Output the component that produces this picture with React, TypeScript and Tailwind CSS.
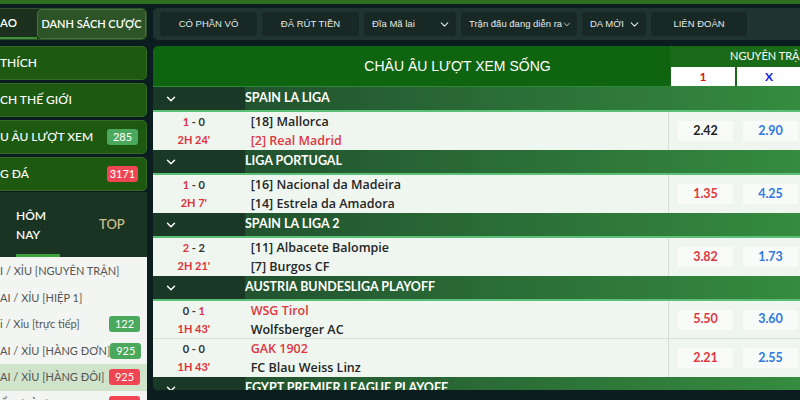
import { ChevronDown } from "lucide-react";

type Match = {
  score: [string, string];
  redGoal: number;
  time: string;
  home: string;
  away: string;
  redTeam: number;
  o1: string;
  o1Red: boolean;
  ox: string;
  o2: string;
};

const leagues: { name: string; matches: Match[] }[] = [
  {
    name: "SPAIN LA LIGA",
    matches: [
      { score: ["1", "0"], redGoal: 0, time: "2H 24'", home: "[18] Mallorca", away: "[2] Real Madrid", redTeam: 1, o1: "2.42", o1Red: false, ox: "2.90", o2: "3.35" },
    ],
  },
  {
    name: "LIGA PORTUGAL",
    matches: [
      { score: ["1", "0"], redGoal: 0, time: "2H 7'", home: "[16] Nacional da Madeira", away: "[14] Estrela da Amadora", redTeam: -1, o1: "1.35", o1Red: true, ox: "4.25", o2: "11.0" },
    ],
  },
  {
    name: "SPAIN LA LIGA 2",
    matches: [
      { score: ["2", "2"], redGoal: 0, time: "2H 21'", home: "[11] Albacete Balompie", away: "[7] Burgos CF", redTeam: -1, o1: "3.82", o1Red: true, ox: "1.73", o2: "4.60" },
    ],
  },
  {
    name: "AUSTRIA BUNDESLIGA PLAYOFF",
    matches: [
      { score: ["0", "1"], redGoal: 1, time: "1H 43'", home: "WSG Tirol", away: "Wolfsberger AC", redTeam: 0, o1: "5.50", o1Red: true, ox: "3.60", o2: "1.62" },
      { score: ["0", "0"], redGoal: -1, time: "1H 43'", home: "GAK 1902", away: "FC Blau Weiss Linz", redTeam: 0, o1: "2.21", o1Red: true, ox: "2.55", o2: "3.90" },
    ],
  },
  { name: "EGYPT PREMIER LEAGUE PLAYOFF", matches: [] },
];

const menu = [
  { hidden: "YÊU ", text: "THÍCH", badge: "", red: false },
  { hidden: "GIẢI VÔ ĐỊ", text: "CH THẾ GIỚI", badge: "", red: false },
  { hidden: "CHÂ", text: "U ÂU LƯỢT XEM", badge: "285", red: false },
  { hidden: "BÓN", text: "G ĐÁ", badge: "3171", red: true },
];

const bets = [
  { hidden: "TÀ", text: "I / XỈU [NGUYÊN TRẬN]", badge: "", red: false, active: false },
  { hidden: "T", text: "AI / XỈU [HIỆP 1]", badge: "", red: false, active: false },
  { hidden: "Tà", text: "i / Xỉu [trực tiếp]", badge: "122", red: false, active: false },
  { hidden: "T", text: "AI / XỈU [HÀNG ĐƠN]", badge: "925", red: false, active: false },
  { hidden: "T", text: "AI / XỈU [HÀNG ĐÔI]", badge: "925", red: true, active: true },
  { hidden: "T", text: "Ổ 3 (KÈO)", badge: "80", red: true, active: false },
];

const filters = [
  { label: "CÓ PHẦN VÔ", drop: false, w: "w-[97px]" },
  { label: "ĐÃ RÚT TIỀN", drop: false, w: "w-[97px]" },
  { label: "Đĩa Mã lai", drop: true, w: "w-[92px]" },
  { label: "Trận đấu đang diễn ra", drop: true, w: "w-[116px]" },
  { label: "DA MỚI", drop: true, w: "w-[64px]" },
  { label: "LIÊN ĐOÀN", drop: false, w: "w-[96px]" },
];

// text whose start is cut off by the left edge of the window
function Clipped({ hidden, text }: { hidden: string; text: string }) {
  return (
    <span className="flex">
      <span className="flex w-0 shrink-0 justify-end whitespace-nowrap">{hidden}</span>
      <span className="whitespace-nowrap">{text}</span>
    </span>
  );
}

function Badge({ value, red }: { value: string; red: boolean }) {
  return (
    <span className={`flex h-[16px] w-[31px] shrink-0 items-center justify-center rounded-[3px] text-[11px] text-white ${red ? "bg-[#f04552]" : "bg-[#4aa95c]"}`}>
      {value}
    </span>
  );
}

function MatchRow({ m, last }: { m: Match; last: boolean }) {
  return (
    <div className={`flex h-[38px] bg-[#eef6ef] ${last ? "" : "border-b border-[#d9e2d9]"}`}>
      <div className="flex w-[82px] flex-col items-center justify-center text-[11px] font-bold leading-[18px]">
        <span className="text-[#333]">
          <span className={m.redGoal === 0 ? "text-[#e0303c]" : ""}>{m.score[0]}</span>
          {" - "}
          <span className={m.redGoal === 1 ? "text-[#e0303c]" : ""}>{m.score[1]}</span>
        </span>
        <span className="text-[#e0303c]">{m.time}</span>
      </div>
      <div className="flex w-[435px] flex-col justify-center pl-4 font-['Open_Sans',sans-serif] text-[12.5px] font-semibold leading-[19px] text-[#252525]">
        <span className={m.redTeam === 0 ? "text-[#e0363f]" : ""}>{m.home}</span>
        <span className={m.redTeam === 1 ? "text-[#e0363f]" : ""}>{m.away}</span>
      </div>
      <div className="flex border-l border-[#d6ddd6] pl-[4px]">
        {[m.o1, m.ox, m.o2].map((o, i) => (
          <div key={i} className="flex w-[65px] items-center px-[5px]">
            <span
              className={`flex h-[20px] w-full items-center justify-center rounded-[2px] bg-[#f8fbf8] text-[12.5px] font-bold ${
                i === 0 ? (m.o1Red ? "text-[#e0363f]" : "text-[#222]") : i === 1 ? "text-[#2f7ade]" : "text-[#e0363f]"
              }`}
            >
              {o}
            </span>
          </div>
        ))}
      </div>
    </div>
  );
}

export default function App() {
  return (
    <div className="h-[400px] w-[800px] overflow-hidden bg-[#0b1d1e] font-['Lato',sans-serif]">
      <div className="h-1 bg-[#2c6e1d]" />
      <div className="flex gap-[6px] pt-1">
        {/* sidebar */}
        <div className="flex w-[147px] shrink-0 flex-col">
          <div className="flex h-[32px] rounded-r-[5px] border border-l-0 border-[#2f4f2a] bg-[#1c361d] text-[11px] font-semibold text-white">
            <div className="flex w-[37px] items-center border-b-2 border-[#3f8f3a] bg-[#1b301d] text-[11.5px]">
              <Clipped hidden="NÂNG C" text="AO" />
            </div>
            <div className="flex flex-1 items-center justify-center whitespace-nowrap rounded-[5px] border border-[#49743f] bg-[#2c5426]">
              DANH SÁCH CƯỢC
            </div>
          </div>
          <div className="mt-[6px] flex flex-col gap-[3px]">
            {menu.map((it) => (
              <div
                key={it.text}
                className="flex h-[34px] items-center justify-between rounded-r-[5px] border border-l-0 border-[#336b27] bg-[#1d5911] pr-2 text-[12px] font-medium text-white"
              >
                <Clipped hidden={it.hidden} text={it.text} />
                {it.badge && <Badge value={it.badge} red={it.red} />}
              </div>
            ))}
          </div>
          <div className="mt-[1px] flex h-[65px] items-center bg-[#193422] text-[12px] font-semibold">
            <div className="ml-4 flex h-full w-[44px] flex-col justify-center border-b-[3px] border-[#3aa43a] pt-1 leading-[19px] text-white">
              <span>HÔM</span>
              <span>NAY</span>
            </div>
            <span className="ml-[39px] text-[13px] text-[#c9bd8c]">TOP</span>
          </div>
          <div className="flex flex-col bg-[#f2f5f2] pt-[1px]">
            {bets.map((b, i) => (
              <div
                key={i}
                className={`flex h-[26.5px] items-center justify-between pr-[7px] text-[11px] text-[#555] ${b.active ? "bg-[#cfe4cb]" : ""}`}
              >
                <Clipped hidden={b.hidden} text={b.text} />
                {b.badge && <Badge value={b.badge} red={b.red} />}
              </div>
            ))}
          </div>
        </div>

        {/* main */}
        <div className="flex min-w-0 flex-1 flex-col gap-[6px]">
          <div className="flex h-[32px] w-[680px] items-center gap-[5px] rounded-l-[5px] bg-[#1f3330] pl-[7px] font-['Liberation_Sans',sans-serif] text-[9.5px] text-[#e4ebe8]">
            {filters.map((f) => (
              <div
                key={f.label}
                className={`flex h-[24px] shrink-0 items-center rounded-[4px] bg-[#172825] ${f.w} ${f.drop ? "justify-between pl-2 pr-[5px]" : "justify-center"}`}
              >
                <span className="whitespace-nowrap">{f.label}</span>
                {f.drop && <ChevronDown size={13} strokeWidth={2} />}
              </div>
            ))}
          </div>

          <div className="h-[344px] w-[715px] shrink-0 overflow-hidden rounded-l-[5px]">
            <div className="flex h-[41px] border-b border-[#2d8a37] text-white">
              <div className="flex w-[517px] items-center justify-center bg-[#0f640f] pl-[92px] font-['Liberation_Sans',sans-serif] text-[14px]">
                CHÂU ÂU LƯỢT XEM SỐNG
              </div>
              <div className="flex w-[198px] flex-col bg-[#196b1a]">
                <div className="flex h-[21px] items-center justify-center text-[11px]">NGUYÊN TRẬN</div>
                <div className="flex gap-[2px] px-[1px]">
                  <span className="flex h-[19px] flex-1 items-center justify-center bg-white text-[12px] font-bold text-[#d4141c]">1</span>
                  <span className="flex h-[19px] flex-1 items-center justify-center bg-white text-[12px] font-bold text-[#1c22d6]">X</span>
                  <span className="flex h-[19px] flex-1 items-center justify-center bg-white text-[12px] font-bold text-[#1a1a1a]">2</span>
                </div>
              </div>
            </div>

            {leagues.map((lg) => (
              <div key={lg.name}>
                <div className="flex h-[25px] items-center border-b-2 border-[#5bbf78] bg-gradient-to-r from-[#1e4a2c] to-[#389341] text-[12.5px] font-bold text-white">
                  <div className="flex h-full w-[92px] items-center bg-[#1a3826] pl-[11px]">
                    <ChevronDown size={14} strokeWidth={2.5} />
                  </div>
                  <span>{lg.name}</span>
                </div>
                {lg.matches.map((m, i) => (
                  <MatchRow key={m.home} m={m} last={i === lg.matches.length - 1} />
                ))}
              </div>
            ))}
          </div>
        </div>
      </div>
    </div>
  );
}
